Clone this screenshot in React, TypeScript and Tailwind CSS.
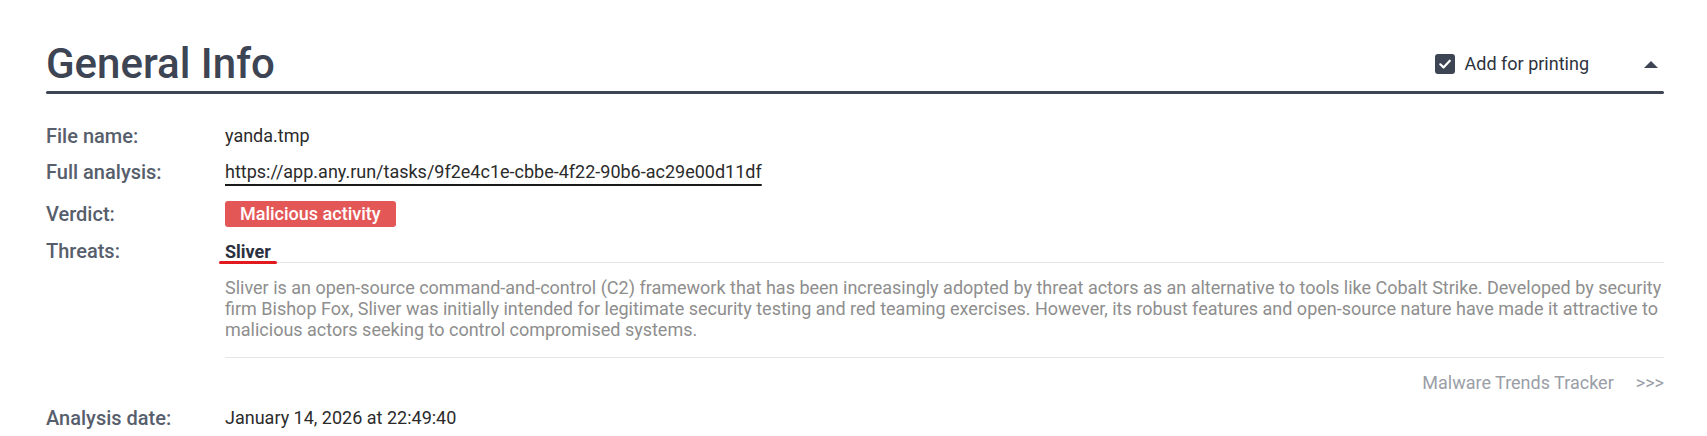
import type { ReactNode } from 'react';

const DESCRIPTION =
    'Sliver is an open-source command-and-control (C2) framework that has been increasingly adopted by threat actors as an alternative to tools like Cobalt Strike. Developed by security firm Bishop Fox, Sliver was initially intended for legitimate security testing and red teaming exercises. However, its robust features and open-source nature have made it attractive to malicious actors seeking to control compromised systems.';

/* label column + value column */
function InfoRow({ label, children, className = '' }: { label: string; children: ReactNode; className?: string }) {
    return (
        <div className={`flex items-center ${className}`}>
            <div className="w-[179px] shrink-0 text-[20px] font-medium leading-[24px] text-[#575e6c]">{label}</div>
            <div className="flex-1 min-w-0">{children}</div>
        </div>
    );
}

function CheckedBox() {
    return (
        <span className="flex h-[20px] w-[20px] items-center justify-center rounded-[3px] bg-[#3d4453]">
            <svg width="14" height="14" viewBox="0 0 14 14" fill="none">
                <path d="M2.3 7.3 L5.5 10.4 L11.8 3.7" stroke="#fff" strokeWidth="2.2" strokeLinecap="round" strokeLinejoin="round" />
            </svg>
        </span>
    );
}

export default function App() {
    return (
        <div className="min-h-[436px] bg-white pl-[46px] pr-[43px] pt-[40px] font-['Roboto',sans-serif]">
            {/* Section header */}
            <div className="flex items-center justify-between">
                <h2 className="text-[42px] font-medium leading-[48px] text-[#3d4453]">General Info</h2>
                <div className="flex items-center">
                    <label className="flex items-center gap-[10px] cursor-pointer">
                        <CheckedBox />
                        <span className="text-[18px] leading-[24px] text-[#2d3240]">Add for printing</span>
                    </label>
                    <span className="ml-[55px] mr-[6px] h-0 w-0 border-x-[7.5px] border-b-[7px] border-x-transparent border-b-[#3d4453]" />
                </div>
            </div>
            <div className="mt-[3px] h-[3px] rounded-full bg-[#3d4453]" />

            {/* Details */}
            <div className="mt-[24px]">
                <InfoRow label="File name:" className="h-[36px]">
                    <span className="text-[18px] leading-[24px] text-[#2b2b2b]">yanda.tmp</span>
                </InfoRow>
                <InfoRow label="Full analysis:" className="h-[36px]">
                    <a
                        href="#"
                        className="text-[18px] leading-[24px] text-[#2b2b2b] underline decoration-[#1a1a1a] decoration-[1.5px] underline-offset-[6px]"
                    >
                        https://app.any.run/tasks/9f2e4c1e-cbbe-4f22-90b6-ac29e00d11df
                    </a>
                </InfoRow>
                <InfoRow label="Verdict:" className="h-[48px]">
                    <span className="inline-flex h-[26px] items-center rounded-[3px] bg-[#e35757] px-[15px] text-[18px] font-medium text-white">
                        Malicious activity
                    </span>
                </InfoRow>

                {/* Threats: name, description, tracker link */}
                <div className="flex items-start pt-[4px]">
                    <div className="w-[179px] shrink-0 text-[20px] font-medium leading-[19px] text-[#575e6c]">Threats:</div>
                    <div className="flex-1 min-w-0">
                        <div className="border-b border-[#e6e6e6] text-[18px] leading-[20px]">
                            <span className="relative inline-block font-bold leading-[19px] text-[#2b3040]">
                                Sliver
                                <span className="absolute -bottom-[3px] -left-[6px] -right-[6px] h-[3px] rounded-full bg-[#e01a1f]" />
                            </span>
                        </div>
                        <p className="border-b border-[#e6e6e6] pb-[17px] pt-[14px] text-[18px] leading-[21px] text-[#8e8e8e]">
                            {DESCRIPTION}
                        </p>
                        <div className="mt-[13px] flex justify-end text-[18px] leading-[24px] text-[#9a9ea6]">
                            <a href="#">Malware Trends Tracker</a>
                            <span className="ml-[22px]">&gt;&gt;&gt;</span>
                        </div>
                    </div>
                </div>

                <InfoRow label="Analysis date:" className="mt-[11px] h-[24px]">
                    <span className="text-[18px] leading-[24px] text-[#2b2b2b]">January 14, 2026 at 22:49:40</span>
                </InfoRow>
            </div>
        </div>
    );
}
